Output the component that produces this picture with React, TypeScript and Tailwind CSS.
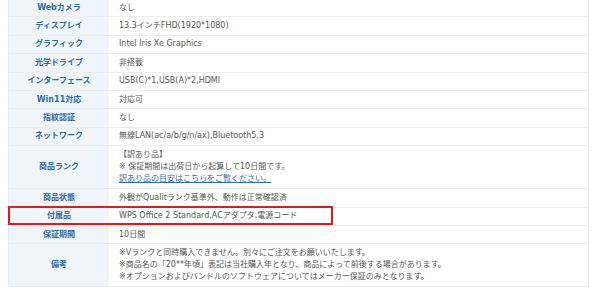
const rows: { label: string; lines: React.ReactNode[] }[] = [
  { label: "Webカメラ", lines: ["なし"] },
  { label: "ディスプレイ", lines: ["13.3インチFHD(1920*1080)"] },
  { label: "グラフィック", lines: ["Intel Iris Xe Graphics"] },
  { label: "光学ドライブ", lines: ["非搭載"] },
  { label: "インターフェース", lines: ["USB(C)*1,USB(A)*2,HDMI"] },
  { label: "Win11対応", lines: ["対応可"] },
  { label: "指紋認証", lines: ["なし"] },
  { label: "ネットワーク", lines: ["無線LAN(ac/a/b/g/n/ax),Bluetooth5.3"] },
  {
    label: "商品ランク",
    lines: [
      "【訳あり品】",
      "※ 保証期間は出荷日から起算して10日間です。",
      <a key="link" href="#" className="text-[#2f6cb3] underline">
        訳あり品の目安はこちらをご覧ください。
      </a>,
    ],
  },
  { label: "商品状態", lines: ["外観がQualitランク基準外、動作は正常確認済"] },
  { label: "付属品", lines: ["WPS Office 2 Standard,ACアダプタ,電源コード"] },
  { label: "保証期間", lines: ["10日間"] },
  {
    label: "備考",
    lines: [
      "※Vランクと同時購入できません。別々にご注文をお願いいたします。",
      "※商品名の「20**年頃」表記は当社購入年となり、商品によって前後する場合があります。",
      "※オプションおよびバンドルのソフトウェアについてはメーカー保証のみとなります。",
    ],
  },
];

export default function App() {
  return (
    <div
      className="w-[600px] h-[292px] bg-white overflow-hidden pl-2 pr-[11px]"
      style={{ fontFamily: '"DejaVu Sans", "Noto Sans CJK JP", sans-serif' }}
    >
      <div className="mt-[-1px] border-x border-[#ececec] text-[8px]">
        {rows.map((row) => {
          const multi = row.lines.length > 1;
          return (
            <div
              key={row.label}
              className={`relative flex border-b border-[#ececec] ${multi ? "" : "h-[18.4px]"}`}
            >
              {/* Label cell */}
              <div className="w-[100px] shrink-0 bg-[#eff5fa] flex items-center justify-center font-bold text-[#2f69a6]">
                {row.label}
              </div>

              {/* Value cell */}
              <div
                className={`flex-1 pl-[10px] text-[#555] flex flex-col justify-center leading-[12px] ${
                  multi ? "py-[3px]" : ""
                }`}
              >
                {row.lines.map((line, i) => (
                  <div key={i}>{line}</div>
                ))}
              </div>

              {/* Highlight box */}
              {row.label === "付属品" && (
                <div className="absolute -left-px top-[-2px] bottom-0 w-[325px] border-2 border-[#e3191f]" />
              )}
            </div>
          );
        })}
      </div>
    </div>
  );
}
